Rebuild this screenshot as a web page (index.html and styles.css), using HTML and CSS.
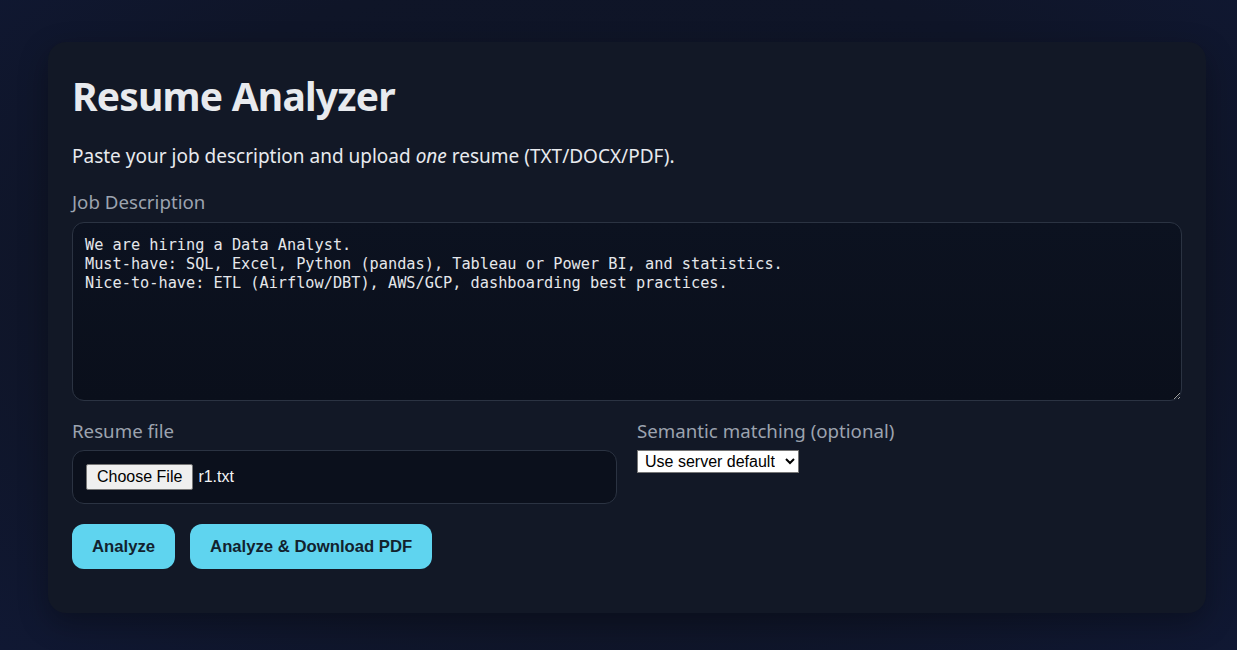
FILE: index.html
```html
<!DOCTYPE html>
<html lang="en">
<head>
<meta charset="utf-8">
<title>Resume Analyzer</title>
<link rel="stylesheet" href="styles.css">
</head>
<body>
<main class="card">
  <h1 class="title">Resume Analyzer</h1>
  <p class="lead">Paste your job description and upload <em>one</em> resume (TXT/DOCX/PDF).</p>
  <label class="label" for="jd">Job Description</label>
  <textarea id="jd" class="jd">We are hiring a Data Analyst.
Must-have: SQL, Excel, Python (pandas), Tableau or Power BI, and statistics.
Nice-to-have: ETL (Airflow/DBT), AWS/GCP, dashboarding best practices.</textarea>
  <div class="row">
    <div class="col">
      <label class="label label-tight">Resume file</label>
      <div class="filebox">
        <span class="filebtn">Choose File</span><span class="filename">r1.txt</span>
      </div>
    </div>
    <div class="col">
      <label class="label label-tight" for="sem">Semantic matching (optional)</label>
      <div>
        <select id="sem" class="select">
          <option>Use server default</option>
        </select>
      </div>
    </div>
  </div>
  <div class="actions">
    <button class="btn">Analyze</button>
    <button class="btn">Analyze &amp; Download PDF</button>
  </div>
</main>
</body>
</html>
```

FILE: styles.css
```css
html, body {
  margin: 0;
  height: 100%;
}
body {
  background: radial-gradient(ellipse at 50% 45%, #0e1424 0%, #0f1528 65%, #101833 100%);
  padding: 42px 31px 0 48px;
  box-sizing: border-box;
  font-family: "Noto Sans", "Open Sans", sans-serif;
  color: #e5e7eb;
}
.card {
  background: #121826;
  border-radius: 18px;
  padding: 24px 24px 44px;
  box-shadow: 0 10px 30px rgba(0, 0, 0, 0.3);
}
.title {
  margin: 0;
  font-size: 39px;
  line-height: 60px;
  font-weight: 700;
  color: #e8eaee;
  letter-spacing: -0.8px;
}
.lead {
  margin: 17px 0 21px;
  font-size: 19px;
  line-height: 26px;
  color: #e8eaee;
}
.label {
  display: block;
  font-size: 18.7px;
  line-height: 24px;
  color: #9ca3af;
  margin-bottom: 8px;
}
.label-tight {
  margin-bottom: 7px;
}
.jd {
  display: block;
  box-sizing: border-box;
  width: 100%;
  height: 179px;
  margin: 0 0 18px;
  padding: 13px 12px;
  background: linear-gradient(180deg, #0c1220, #0a0f1b);
  border: 1px solid #2b3342;
  border-radius: 12px;
  color: #e5e7eb;
  font-family: "DejaVu Sans Mono", "Liberation Mono", monospace;
  font-size: 15.25px;
  line-height: 19px;
  outline: none;
}
.row {
  display: grid;
  grid-template-columns: 1fr 1fr;
  gap: 20px;
}
.filebox {
  box-sizing: border-box;
  height: 54px;
  display: flex;
  align-items: center;
  padding: 0 13px;
  background: #0b101c;
  border: 1px solid #2b3342;
  border-radius: 12px;
  font-family: "Liberation Sans", Arial, sans-serif;
  font-size: 16px;
}
.filebtn {
  box-sizing: border-box;
  height: 26px;
  line-height: 24px;
  padding: 0 10px;
  background: #efefef;
  color: #000;
  border: 1px solid #767676;
  border-radius: 2px;
  margin-right: 5px;
}
.filename {
  color: #f3f4f6;
}
.select {
  margin-top: -3px;
  height: 23px;
  font-family: "Liberation Sans", Arial, sans-serif;
  font-size: 16px;
  background: #fff;
  color: #000;
  border: 1px solid #767676;
  border-radius: 0;
  padding: 0 7px 0 3px;
}
.actions {
  display: flex;
  gap: 15px;
  margin-top: 20px;
}
.btn {
  height: 45px;
  padding: 0 20px;
  border: none;
  border-radius: 12px;
  background: #5fd4ef;
  color: #12222e;
  font-family: "Liberation Sans", Arial, sans-serif;
  font-weight: 700;
  font-size: 16.7px;
}
```
